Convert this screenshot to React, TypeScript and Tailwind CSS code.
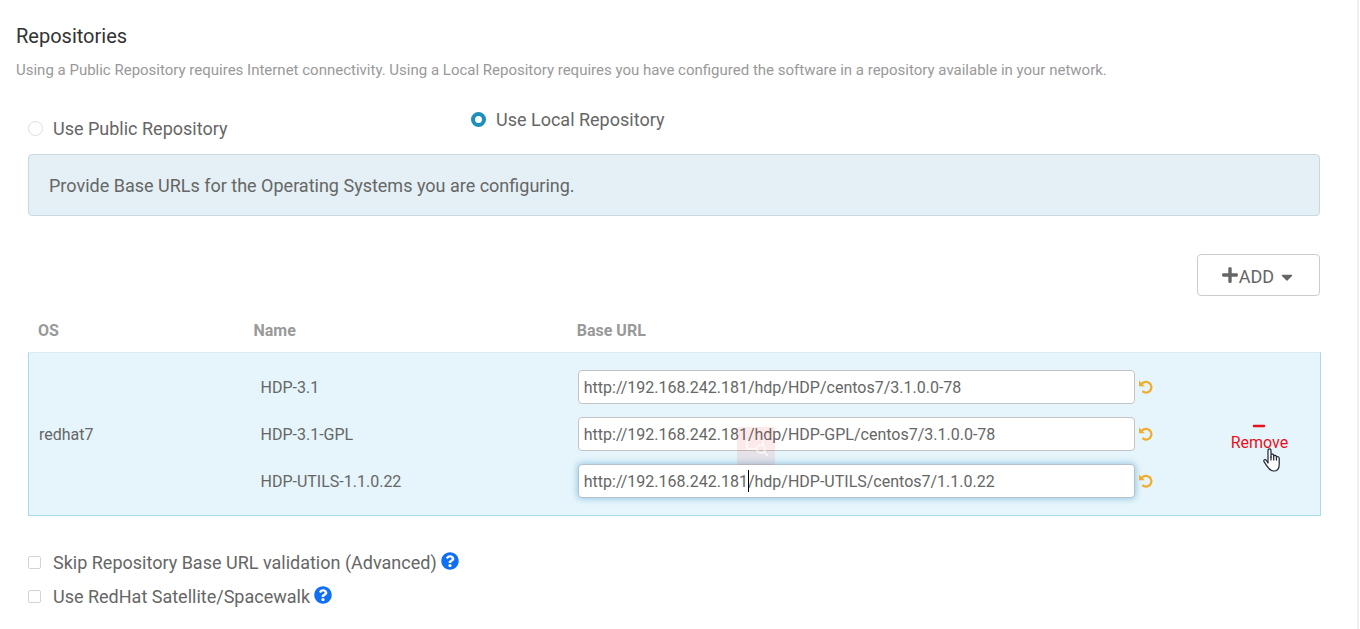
import { FaPlus, FaMinus, FaCaretDown, FaQuestionCircle } from "react-icons/fa";

type Repo = { id: string; name: string; url: string; active?: boolean };

const repos: Repo[] = [
  { id: "hdp", name: "HDP-3.1", url: "http://192.168.242.181/hdp/HDP/centos7/3.1.0.0-78" },
  { id: "gpl", name: "HDP-3.1-GPL", url: "http://192.168.242.181/hdp/HDP-GPL/centos7/3.1.0.0-78" },
  { id: "utils", name: "HDP-UTILS-1.1.0.22", url: "http://192.168.242.181/hdp/HDP-UTILS/centos7/1.1.0.22", active: true },
];

function UndoIcon() {
  return (
    <svg viewBox="0 0 14 14" className="size-[14px]" fill="none" stroke="#f0ad2e" strokeWidth="2.3" aria-hidden="true">
      <path d="M2.8 3.8A5.4 5.4 0 1 1 3.4 11.2" />
      <path d="M0 0.4V6.2H5.8Z" fill="#f0ad2e" stroke="none" />
    </svg>
  );
}

function HandPointer() {
  return (
    <svg viewBox="0 0 18 24" className="h-6 w-[18px]" fill="#fff" stroke="#1c2530" strokeWidth="1.2" strokeLinejoin="round" aria-hidden="true">
      <path d="M5 15V2.4C5 .3 8 .3 8 2.4V9.2 6.8C8.6 5.6 10.6 6 10.7 7.4V8C11.4 6.9 13.2 7.2 13.4 8.6V9.2C14.2 8.2 16.2 8.6 16.2 10.2V16.4C16.2 20.6 14 23 10.6 23C7.2 23 5.6 20.6 3.6 17.6L1 13.6C.2 12 2.2 11 3.2 12.2Z" />
      <path d="M8 8.6V12.4M10.7 8V12.4M13.4 9.2V12.6" fill="none" />
    </svg>
  );
}

function Watermark() {
  return (
    <svg viewBox="0 0 38 38" className="pointer-events-none absolute left-[159px] top-[10px] z-10 size-[38px]" fill="none" aria-hidden="true">
      <rect width="38" height="38" rx="3" fill="#e0303c" fillOpacity="0.1" />
      <path d="M10 13V22H20M26 13V18" stroke="#fff" strokeOpacity="0.6" strokeWidth="2" />
      <circle cx="24" cy="22" r="4" stroke="#fff" strokeOpacity="0.6" strokeWidth="2" />
      <path d="M27 25L31 29" stroke="#fff" strokeOpacity="0.6" strokeWidth="2" />
    </svg>
  );
}

function OptionCheck({ id, label }: { id: string; label: string }) {
  return (
    <div className="flex h-[34px] items-center">
      <input id={id} type="checkbox" className="mb-[2px] size-[13px] appearance-none rounded-[2px] border border-[#d4d4d4] bg-white checked:bg-[#1491c1]" />
      <label htmlFor={id} className="ml-3 text-lg leading-6">{label}</label>
      <button type="button" aria-label={`Help: ${label}`} className="mb-1 ml-1 text-[#0f6ff5]">
        <FaQuestionCircle className="size-[18px]" />
      </button>
    </div>
  );
}

const radioClass =
  "mb-[2px] size-[15px] appearance-none rounded-full border border-[#ddd] bg-white checked:border-4 checked:border-[#1c8fbc]";

export default function App() {
  return (
    <main className="mr-px min-h-screen border-r-2 border-[#efefef] bg-white pb-4 pl-4 pr-9 pt-6 font-['Roboto',sans-serif] text-[#666]">
      <h1 className="text-xl leading-6 text-[#333]">Repositories</h1>
      <p className="mt-3 text-[15px] leading-5 text-[#999]">
        Using a Public Repository requires Internet connectivity. Using a Local Repository requires you have configured the software in a repository available in your network.
      </p>
      <div className="ml-3">
        <div role="radiogroup" aria-label="Repository type" className="mt-7 flex items-start">
          <div className="flex w-[443px] items-center pt-[9px]">
            <input id="public" type="radio" name="repository" className={radioClass} />
            <label htmlFor="public" className="ml-[10px] text-lg leading-6">Use Public Repository</label>
          </div>
          <div className="flex items-center">
            <input id="local" type="radio" name="repository" defaultChecked className={radioClass} />
            <label htmlFor="local" className="ml-[10px] text-lg leading-6">Use Local Repository</label>
          </div>
        </div>
        <div className="mr-px mt-[13px] rounded border border-[#c9d9e0] bg-[#e4f0f5] px-5 pb-[17px] pt-[19px] text-lg leading-6">
          Provide Base URLs for the Operating Systems you are configuring.
        </div>
        <div className="mr-px mt-[38px] flex justify-end">
          <button type="button" className="flex h-[42px] w-[123px] items-center justify-center rounded border border-[#ccc] bg-white pt-[3px] text-lg">
            <FaPlus className="mb-1 size-[18px]" />
            <span>ADD</span>
            <FaCaretDown className="ml-1 size-[18px]" />
          </button>
        </div>
        <table className="mt-3 w-full table-fixed border-separate border-spacing-0 text-base leading-5">
          <colgroup>
            <col className="w-1/6" />
            <col className="w-1/4" />
            <col />
            <col className="w-[122px]" />
          </colgroup>
          <thead>
            <tr className="h-11 text-left text-[#999]">
              <th className="px-[10px] pt-[2px] font-bold">OS</th>
              <th className="px-[10px] pt-[2px] font-bold">Name</th>
              <th className="px-[10px] pt-[2px] font-bold">Base URL</th>
              <td />
            </tr>
          </thead>
          <tbody className="bg-[#e5f5fb]">
            {repos.map((repo, i) => {
              const pad = i === 0 ? "pt-[17px] pb-[6px]" : i === 2 ? "pt-[7px] pb-[17px] border-b" : "pt-[7px] pb-[6px]";
              const namePad = i === 0 ? "pt-[19px] pb-[6px]" : i === 2 ? "pt-[9px] pb-[17px] border-b" : "pt-[9px] pb-[6px]";
              const top = i === 0 ? "border-t border-t-[#dcebf1]" : "";
              return (
                <tr key={repo.id}>
                  {i === 0 && (
                    <td rowSpan={3} className="border-y border-l border-[#abdbe6] border-t-[#dcebf1] pl-[10px] pt-[2px]">redhat7</td>
                  )}
                  <td className={`border-[#abdbe6] pl-[17px] ${namePad} ${top}`}>
                    <label htmlFor={repo.id}>{repo.name}</label>
                  </td>
                  <td className={`border-[#abdbe6] pl-[11px] ${pad} ${top}`}>
                    <div className="relative flex items-center">
                      <input
                        id={repo.id}
                        type="text"
                        defaultValue={repo.url}
                        className={`h-[34px] w-[557px] min-w-0 rounded border bg-white px-[5px] text-base outline-none ${repo.active ? "border-[#b3c3cc] shadow-[0_0_6px_1px_#9cc8e2]" : "border-[#c4c4c4]"}`}
                      />
                      <button type="button" aria-label={`Undo ${repo.name}`} className="ml-1">
                        <UndoIcon />
                      </button>
                      {repo.id === "gpl" && <Watermark />}
                      {repo.active && <span className="absolute left-[170px] top-[6px] h-[22px] w-px bg-black" />}
                    </div>
                  </td>
                  {i === 0 && (
                    <td rowSpan={3} className="border-y border-r border-[#abdbe6] border-t-[#dcebf1] pt-[2px] text-center">
                      <div className="relative inline-block">
                        <button type="button" className="flex flex-col items-center text-[#e8101c]">
                          <FaMinus className="size-[14px]" />
                          <span>Remove</span>
                        </button>
                        <span className="pointer-events-none absolute left-8 top-[29px]">
                          <HandPointer />
                        </span>
                      </div>
                    </td>
                  )}
                </tr>
              );
            })}
          </tbody>
        </table>
        <div className="mt-[30px]">
          <OptionCheck id="skip" label="Skip Repository Base URL validation (Advanced)" />
          <OptionCheck id="satellite" label="Use RedHat Satellite/Spacewalk" />
        </div>
      </div>
    </main>
  );
}
